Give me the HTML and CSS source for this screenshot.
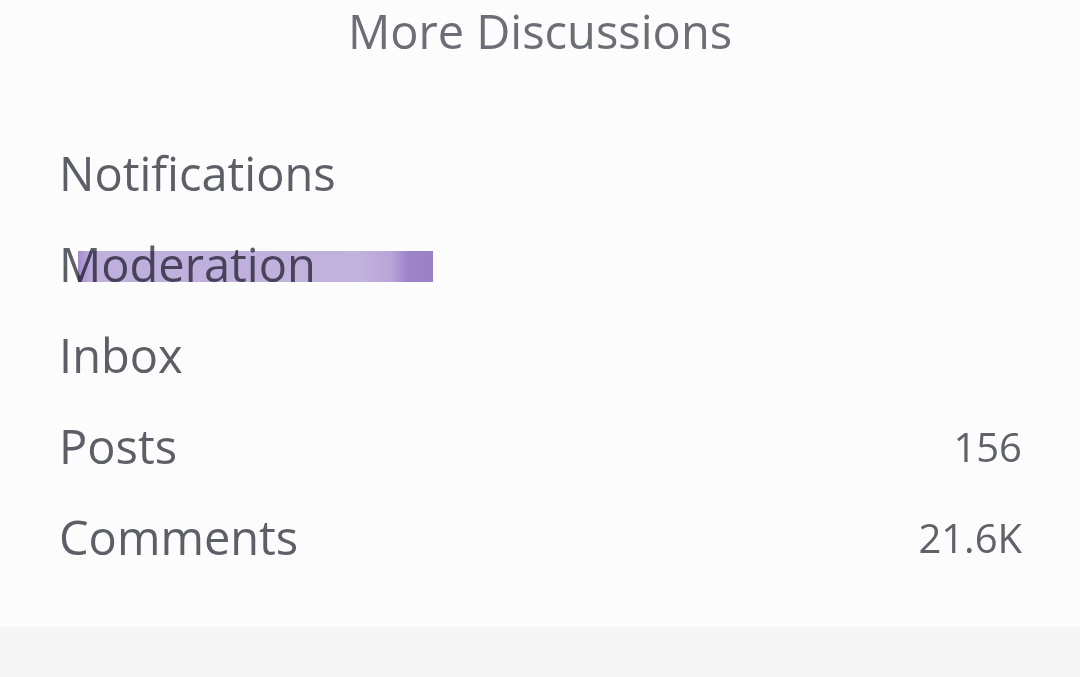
FILE: index.html
```html
<!DOCTYPE html>
<html lang="en">
<head>
	<meta charset="UTF-8" />
	<meta name="viewport" content="width=device-width, initial-scale=1.0" />
	<title>More Discussions</title>
	<link rel="stylesheet" href="styles.css">
</head>
<body>
	<div class="panel">
		<h2 class="panel_title">More Discussions</h2>
		<ul class="menu">
			<li class="menu_item"><span class="menu_label">Notifications</span></li>
			<li class="menu_item">
				<span class="menu_label">Moderation</span>
				<span class="marker"></span>
			</li>
			<li class="menu_item"><span class="menu_label">Inbox</span></li>
			<li class="menu_item"><span class="menu_label">Posts</span><span class="menu_count">156</span></li>
			<li class="menu_item"><span class="menu_label">Comments</span><span class="menu_count">21.6K</span></li>
		</ul>
	</div>
	<div class="footer_band"></div>
</body>
</html>
```

FILE: styles.css
```css
* { margin: 0; padding: 0; box-sizing: border-box; }
body {
    background: #f5f5f5;
    font-family: "Open Sans", "Liberation Sans", sans-serif;
    color: #5c5f66;
}
.panel {
    background: #fcfcfc;
    height: 627px;
    overflow: hidden;
}
.panel_title {
    font-weight: 400;
    font-size: 47px;
    line-height: 62px;
    text-align: center;
    color: #6b6e74;
    padding-bottom: 66px;
}
.menu { list-style: none; }
.menu_item {
    position: relative;
    display: flex;
    justify-content: space-between;
    align-items: center;
    height: 91px;
    line-height: 91px;
    padding: 0 58px 0 59px;
}
.menu_label { font-size: 47px; }
.menu_count { font-size: 40px; color: #5f6268; }
.marker {
    position: absolute;
    left: 78px;
    top: 32px;
    width: 355px;
    height: 31px;
    background: linear-gradient(90deg, #a58dd0 0, #c2b1df 4%, #c4b3e0 80%, #bba8dc 88%, #9f86cc 93%, #9c83ca 100%);
    mix-blend-mode: multiply;
}
.footer_band { height: 50px; background: #f5f5f5; }
```
